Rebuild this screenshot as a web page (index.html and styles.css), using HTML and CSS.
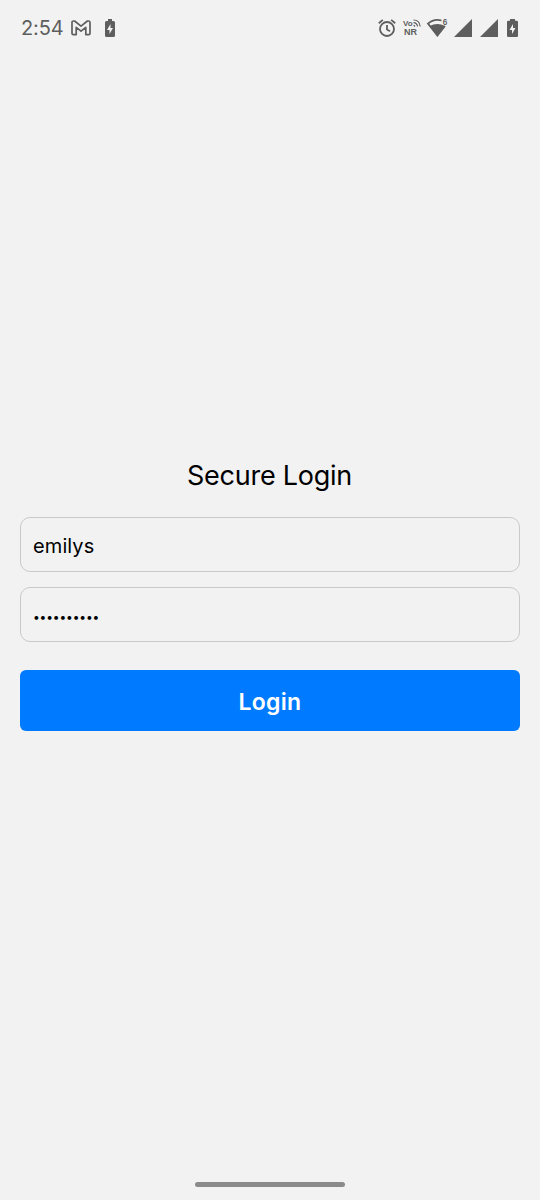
FILE: index.html
```html
<!DOCTYPE html>
<html lang="en">
<head>
<meta charset="utf-8">
<title>Secure Login</title>
<link rel="stylesheet" href="styles.css">
</head>
<body>
<div class="screen">
  <header class="status">
    <div class="status-left">
      <span class="clock">2:54</span>
      <svg class="gmail" width="20" height="16" viewBox="0 0 20 16"><path d="M1 2.6Q1 1 2.6 1H3.6L10 6.2 16.4 1H17.4Q19 1 19 2.6V13.2Q19 14.6 17.6 14.6H14.8V7.3L10 11.1 5.2 7.3V14.6H2.4Q1 14.6 1 13.2Z"/></svg>
      <svg class="solid" width="10" height="18" viewBox="0 0 10 18"><path fill-rule="evenodd" d="M3 0H7V2H8.5Q10 2 10 3.5V16.5Q10 18 8.5 18H1.5Q0 18 0 16.5V3.5Q0 2 1.5 2H3ZM5.5 5L2 11H4.5V15L8 9H5.5Z"/></svg>
    </div>
    <div class="status-right">
      <svg class="alarm" width="18" height="19" viewBox="0 0 18 19"><circle cx="9" cy="10" r="7"/><path d="M9 6V10.5L12 12.2M.8 4.2L4.8 .9M17.2 4.2L13.2 .9"/></svg>
      <div class="vonr">
        <span class="vo">Vo<svg class="waves" width="8" height="8" viewBox="0 0 8 8"><path d="M.5 1Q6.5 1 7.2 7.5M.5 3.6Q4 3.7 4.6 7.5M.7 6.2L2 7.5"/></svg></span>
        <span class="nr">NR</span>
      </div>
      <svg class="solid wifi" width="22" height="20" viewBox="0 0 22 20"><path d="M2.6 8Q10.3 3.8 18 8L10.4 18.4Z"/><path class="wifi-outline" d="M14.5 2.5Q7 .3 1 5.6L10.4 17.6 18 8"/><text x="15.8" y="6.9">6</text></svg>
      <svg class="solid signal" width="18" height="18" viewBox="0 0 18 18"><path d="M18 0V18H0Z"/></svg>
      <svg class="solid signal-two" width="18" height="18" viewBox="0 0 18 18"><path d="M18 0V18H0Z"/></svg>
      <svg class="solid battery" width="11" height="18" viewBox="0 0 11 18"><path fill-rule="evenodd" d="M3 0H8V1.8H9.8Q11 1.8 11 3V16.8Q11 18 9.8 18H1.2Q0 18 0 16.8V3Q0 1.8 1.2 1.8H3ZM6 5L2.5 11H5V15L8.5 9H6Z"/></svg>
    </div>
  </header>
  <main class="login">
    <h1 class="title">Secure Login</h1>
    <div class="field">emilys</div>
    <div class="field password">••••••••••</div>
    <button class="submit" type="button">Login</button>
  </main>
  <div class="home-bar"></div>
</div>
</body>
</html>
```
FILE: styles.css
```css
* { box-sizing: border-box; }
body { margin: 0; background: #f2f2f2; font-family: Inter, "Noto Sans", sans-serif; }
.screen { width: 540px; height: 1200px; display: flex; flex-direction: column; overflow: hidden; }
.status { height: 56px; padding: 0 22px 0 21px; display: flex; justify-content: space-between; align-items: center; color: #5e5e5e; }
.status-left, .status-right { display: flex; align-items: center; }
.clock { width: 50px; font-size: 20px; line-height: 24px; letter-spacing: -0.1px; }
.gmail { margin-right: 14px; fill: none; stroke: #5e5e5e; stroke-width: 1.7; stroke-linejoin: round; }
.solid { fill: #5e5e5e; }
.alarm { fill: none; stroke: #5e5e5e; stroke-width: 1.8; }
.vonr { width: 19px; margin-left: 7px; display: flex; flex-direction: column; }
.vo { display: flex; font: 700 8px/9px "Liberation Sans", Arial, sans-serif; }
.nr { padding-left: 1px; font: 700 9px/9px "Liberation Sans", Arial, sans-serif; }
.waves { flex: none; fill: none; stroke: #5e5e5e; stroke-width: 1.2; }
.wifi { margin-left: 5px; overflow: visible; }
.wifi text { font-size: 7px; font-weight: 700; }
.wifi-outline { fill: none; stroke: #5e5e5e; stroke-width: 1.8; }
.signal { margin-left: 5px; }
.signal-two { margin-left: 8px; }
.battery { margin-left: 9px; }
.login { flex: 1; padding: 403px 20px 0; display: flex; flex-direction: column; }
.title { margin: 0 0 24px; padding-right: 1px; height: 34px; line-height: 34px; text-align: center; font-size: 27px; font-weight: 400; letter-spacing: -0.24px; color: #000; }
.field { height: 55px; margin-bottom: 15px; padding: 0 12px; border: 1px solid #c9c9c9; border-radius: 10px; font-size: 20px; line-height: 57px; letter-spacing: 0.1px; color: #000; }
.password { margin-bottom: 28px; font-size: 12px; letter-spacing: -0.13px; }
.submit { height: 61px; border: 0; border-radius: 6px; padding: 2px 0 0; background: #007bff; color: #fff; font: 600 23px Inter, "Noto Sans", sans-serif; letter-spacing: 0.3px; }
.home-bar { width: 150px; height: 5px; margin: 0 auto 13px; border-radius: 3px; background: #8b8b8b; }
```
